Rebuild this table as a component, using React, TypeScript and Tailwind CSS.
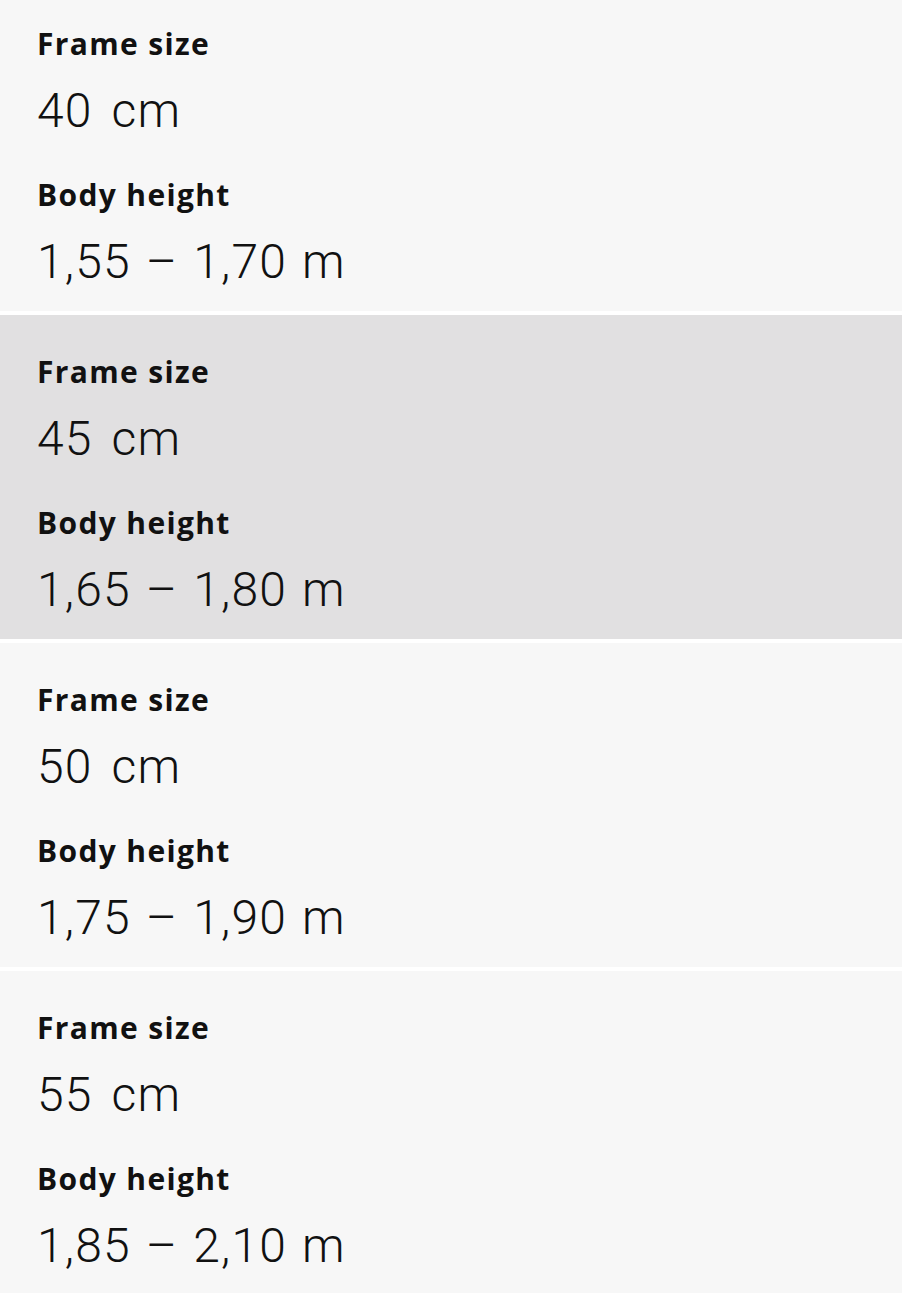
const sizes = [
  { frame: "40 cm", height: "1,55 – 1,70 m" },
  { frame: "45 cm", height: "1,65 – 1,80 m", selected: true },
  { frame: "50 cm", height: "1,75 – 1,90 m" },
  { frame: "55 cm", height: "1,85 – 2,10 m" },
];

function SizeCard({ frame, height, selected }: { frame: string; height: string; selected?: boolean }) {
  return (
    <div
      className={
        "h-[324px] pl-[37px] pt-[39px] text-[#111] " + (selected ? "bg-[#e1e0e1]" : "bg-[#f7f7f7]")
      }
    >
      <p className="text-[30px] leading-[36px] font-bold tracking-[0.045em] font-['Open_Sans',sans-serif]">
        Frame size
      </p>
      <p className="mt-[21px] text-[48px] leading-[56px] font-light tracking-[0.025em] [word-spacing:6px] font-['Roboto',sans-serif]">
        {frame}
      </p>
      <p className="mt-[38px] text-[30px] leading-[36px] font-bold tracking-[0.045em] font-['Open_Sans',sans-serif]">
        Body height
      </p>
      <p className="mt-[21px] text-[48px] leading-[56px] font-light tracking-[0.025em] [word-spacing:2px] font-['Roboto',sans-serif]">
        {height}
      </p>
    </div>
  );
}

export default function App() {
  return (
    <div className="h-[1293px] overflow-hidden bg-white">
      <div className="-mt-[13px] flex flex-col gap-[4px]">
        {sizes.map((s, i) => (
          <SizeCard key={i} {...s} />
        ))}
      </div>
    </div>
  );
}
